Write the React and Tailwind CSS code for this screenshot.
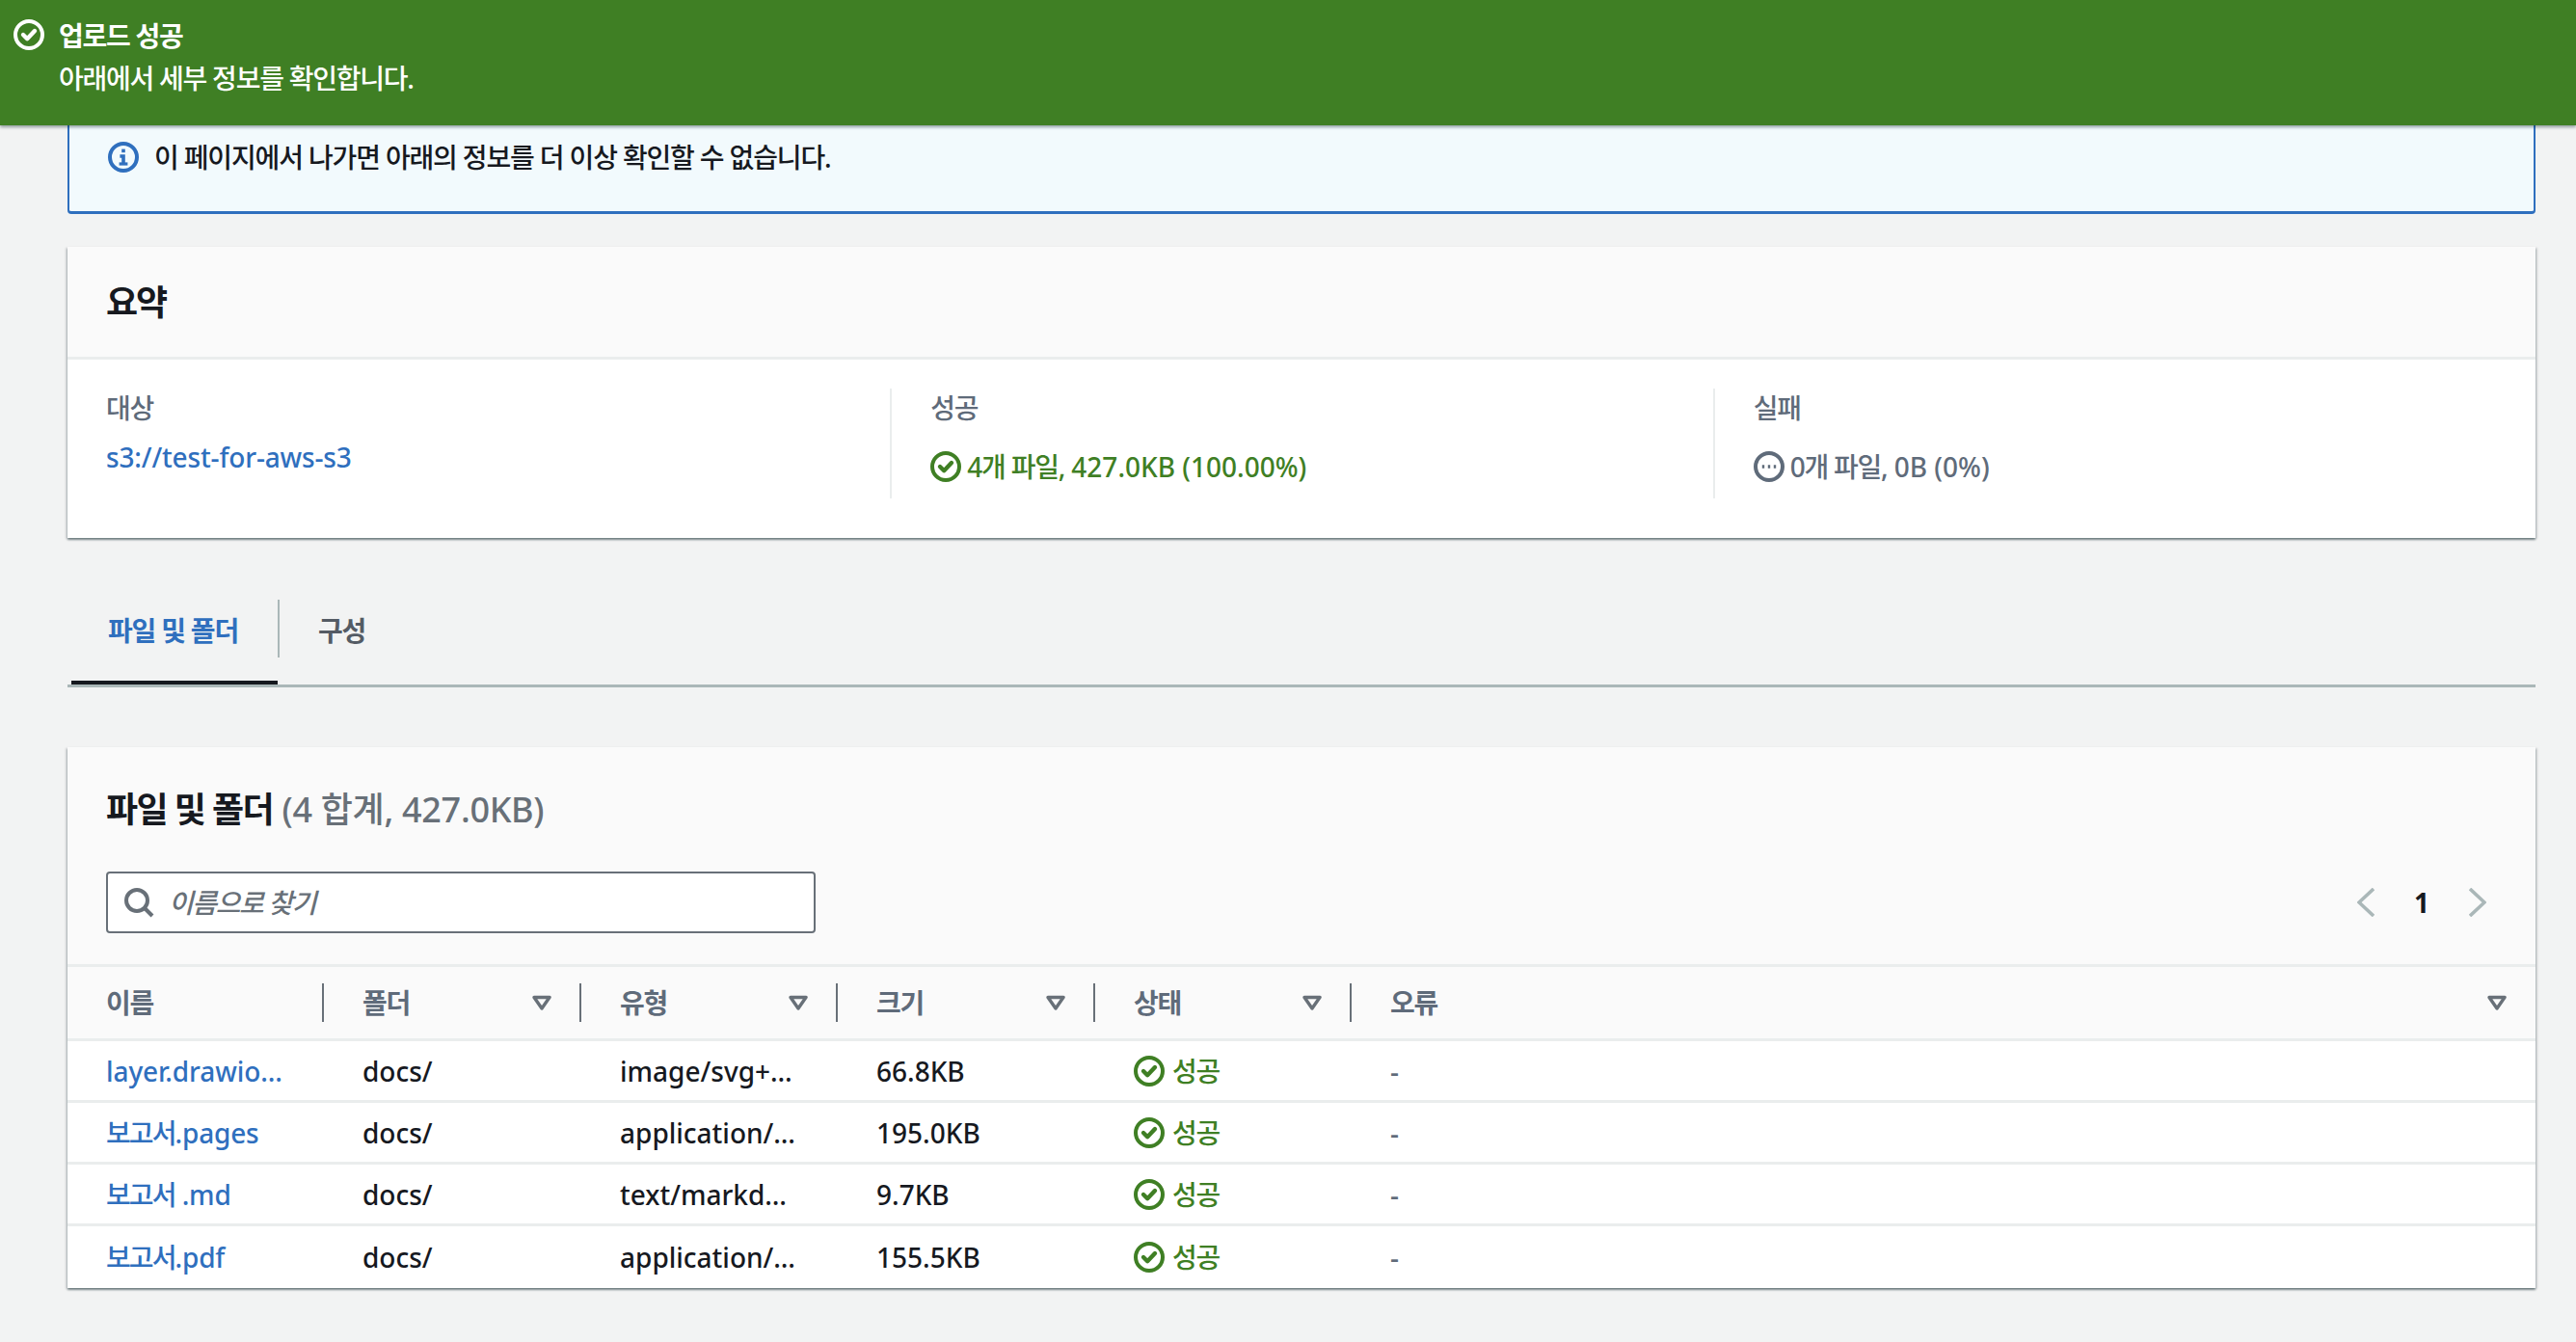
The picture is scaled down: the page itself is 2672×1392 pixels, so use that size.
const F = '[font-family:"Noto_Sans","Noto_Sans_CJK_KR",sans-serif]';

function K({ children }) {
  return <span className="tracking-[-1.25px]">{children}</span>;
}

function R({ children }) {
  return <span className="tracking-[-0.2px]"><span className="tracking-[-1.9px]">보고서</span>{children}</span>;
}

function CheckCircle({ className = "" }) {
  return (
    <svg viewBox="0 0 16 16" fill="none" stroke="currentColor" strokeWidth="2" className={className}>
      <circle cx="8" cy="8" r="7" />
      <path d="M5 8l2.1 2.1L11 6" strokeWidth="2.2" strokeLinecap="round" strokeLinejoin="round" />
    </svg>
  );
}

function InfoIcon({ className = "" }) {
  return (
    <svg viewBox="0 0 16 16" fill="none" stroke="currentColor" strokeWidth="2" className={className}>
      <circle cx="8" cy="8" r="7" />
      <path d="M8 12V7.5H6.2" strokeWidth="1.8" />
      <path d="M5.8 11.5h4.4" strokeWidth="1.6" />
      <path d="M8 3.8v1.8" strokeWidth="1.8" />
    </svg>
  );
}

function PendingIcon({ className = "" }) {
  return (
    <svg viewBox="0 0 16 16" fill="none" stroke="currentColor" strokeWidth="2" className={className}>
      <circle cx="8" cy="8" r="7" />
      <path d="M4.4 8h1.2M7.4 8h1.2M10.4 8h1.2" strokeWidth="1.8" />
    </svg>
  );
}

function FilterCaret() {
  return (
    <svg viewBox="0 0 20 16" fill="none" stroke="#687078" strokeWidth="3.4" strokeLinejoin="round" className="h-4 w-5 shrink-0">
      <path d="M10 14L18 2.5H2z" />
    </svg>
  );
}

function Chevron({ left }) {
  return (
    <svg viewBox="0 0 18 30" fill="none" stroke="#aab7b8" strokeWidth="3.6" className="h-[30px] w-[18px]">
      <path d={left ? "M17 1L2 15l15 14" : "M1 1l15 14L1 29"} />
    </svg>
  );
}

const rows = [
  [<span className="tracking-[-0.1px]">layer.drawio…</span>, "image/svg+…", "66.8KB"],
  [<R>.pages</R>, "application/…", "195.0KB"],
  [<R> .md</R>, "text/markd…", "9.7KB"],
  [<R>.pdf</R>, "application/…", "155.5KB"],
];

const cols = "grid grid-cols-[266px_267px_266px_267px_266px_1fr]";
const cardShadow = "shadow-[0_2px_2px_0_rgba(0,28,36,0.45),2px_1px_2px_0_rgba(0,28,36,0.12),-2px_1px_2px_0_rgba(0,28,36,0.12)]";

function HeadCell({ label, last, noFilter }) {
  return (
    <div className="flex items-center pl-10">
      <span className="font-bold tracking-[-1.3px] text-[#5f6b7a]">{label}</span>
      <span className="ml-auto flex items-center">
        {!noFilter && <FilterCaret />}
        {!last && <span className={`h-10 w-[2px] bg-[#687078] ${noFilter ? "" : "ml-[29px]"}`} />}
        {last && <span className="w-[30px]" />}
      </span>
    </div>
  );
}

export default function App() {
  return (
    <div className={`${F} min-h-[1392px] bg-[#f2f3f3] text-[28px] leading-[40px] font-medium text-[#16191f]`}>
      <div className="relative z-10 flex h-[130px] gap-[15px] bg-[#3f7f24] pl-[14px] pt-[17px] text-white shadow-[0_2px_3px_rgba(0,28,36,0.4)]">
        <CheckCircle className="mt-[3px] h-8 w-8 shrink-0" />
        <div className="flex flex-col gap-1 tracking-[-1.25px]">
          <span className="font-bold">업로드 성공</span>
          <span>아래에서 세부 정보를 확인합니다.</span>
        </div>
      </div>

      <div className="pl-[70px] pr-[42px]">
        <div className="flex h-[92px] items-start gap-4 rounded-b-[4px] border-x-2 border-b-[3px] border-[#2f6fbe] bg-[#f2fafd] pl-10 pt-[13px]">
          <InfoIcon className="mt-[4px] h-8 w-8 shrink-0 text-[#2f6fbe]" />
          <span className="tracking-[-1.15px]">이 페이지에서 나가면 아래의 정보를 더 이상 확인할 수 없습니다.</span>
        </div>

        <section className={`mt-[34px] bg-white ${cardShadow}`}>
          <div className="flex h-[117px] items-center border-b-[3px] border-[#eaeded] bg-[#fafafa] pl-10 pt-[2px]">
            <h2 className="text-[36px] font-bold tracking-[-2px]">요약</h2>
          </div>
          <div className="grid h-[185px] grid-cols-3 pt-[30px]">
            <div className="pl-10">
              <div className="text-[#5f6b7a] tracking-[-1.25px]">대상</div>
              <a className="mt-[11px] block tracking-[-0.15px] text-[#2f6fbe]">s3://test-for-aws-s3</a>
            </div>
            <div className="h-[114px] border-l-2 border-[#eaeded] pl-10">
              <div className="text-[#5f6b7a] tracking-[-1.25px]">성공</div>
              <div className="mt-[21px] flex items-center gap-[6px] text-[#3f7f24]">
                <CheckCircle className="h-8 w-8 shrink-0" />
                <span><K>4개 파일,</K> 427.0KB (100.00%)</span>
              </div>
            </div>
            <div className="h-[114px] border-l-2 border-[#eaeded] pl-10">
              <div className="text-[#5f6b7a] tracking-[-1.25px]">실패</div>
              <div className="mt-[21px] flex items-center gap-[6px] text-[#5f6b7a]">
                <PendingIcon className="h-8 w-8 shrink-0" />
                <span><K>0개 파일,</K> 0B (0%)</span>
              </div>
            </div>
          </div>
        </section>

        <nav className="mt-[64px] flex h-[91px] items-start border-b-[3px] border-[#aab7b8] pl-1">
          <div className="flex h-[88px] w-[214px] items-start justify-center border-b-4 border-[#16191f] pr-[3px] pt-[12px] font-bold tracking-[-1.2px] text-[#2f6fbe]">
            파일 및 폴더
          </div>
          <div className="h-[60px] w-[2px] bg-[#aab7b8]" />
          <div className="pl-10 pt-[12px] font-bold tracking-[-1.2px] text-[#545b64]">구성</div>
        </nav>

        <section className={`mt-[62px] bg-white ${cardShadow}`}>
          <div className="bg-[#fafafa]">
            <div className="px-10 pt-[40px]">
              <h2 className="text-[36px] leading-[50px] font-bold">
                <span className="tracking-[-1.6px]">파일 및 폴더</span>{" "}
                <span className="font-medium tracking-[-0.3px] text-[#687078]">(4 합계, 427.0KB)</span>
              </h2>
              <div className="mt-[39px] flex items-center justify-between pb-[32px]">
                <div className="flex h-[64px] w-[736px] items-center gap-[15px] rounded-[4px] border-2 border-[#687078] bg-white pl-4">
                  <svg viewBox="0 0 32 32" fill="none" stroke="#687078" strokeWidth="4" className="h-8 w-8 shrink-0">
                    <circle cx="14" cy="14" r="11" />
                    <path d="M22 22l8 8" />
                  </svg>
                  <span className="italic tracking-[-1.4px] text-[#687078]">이름으로 찾기</span>
                </div>
                <div className="flex items-center gap-[41px] pr-[11px]">
                  <Chevron left />
                  <span className="font-bold">1</span>
                  <Chevron />
                </div>
              </div>
            </div>
            <div className={`${cols} h-[80px] items-center border-y-[3px] border-[#eaeded]`}>
              <HeadCell label="이름" noFilter />
              <HeadCell label="폴더" />
              <HeadCell label="유형" />
              <HeadCell label="크기" />
              <HeadCell label="상태" />
              <HeadCell label="오류" last />
            </div>
          </div>
          {rows.map((r, i) => (
            <div key={i} className={`${cols} h-[64px] items-center ${i < 3 ? "border-b-[3px] border-[#eaeded]" : ""}`}>
              <a className="pl-10 text-[#2f6fbe]">{r[0]}</a>
              <div className="pl-10">docs/</div>
              <div className="pl-10">{r[1]}</div>
              <div className="pl-10">{r[2]}</div>
              <div className="flex items-center gap-[8px] pl-10 text-[#3f7f24]">
                <CheckCircle className="h-8 w-8 shrink-0" />
                <K>성공</K>
              </div>
              <div className="pl-10 text-[#5f6b7a]">-</div>
            </div>
          ))}
        </section>
      </div>
    </div>
  );
}
